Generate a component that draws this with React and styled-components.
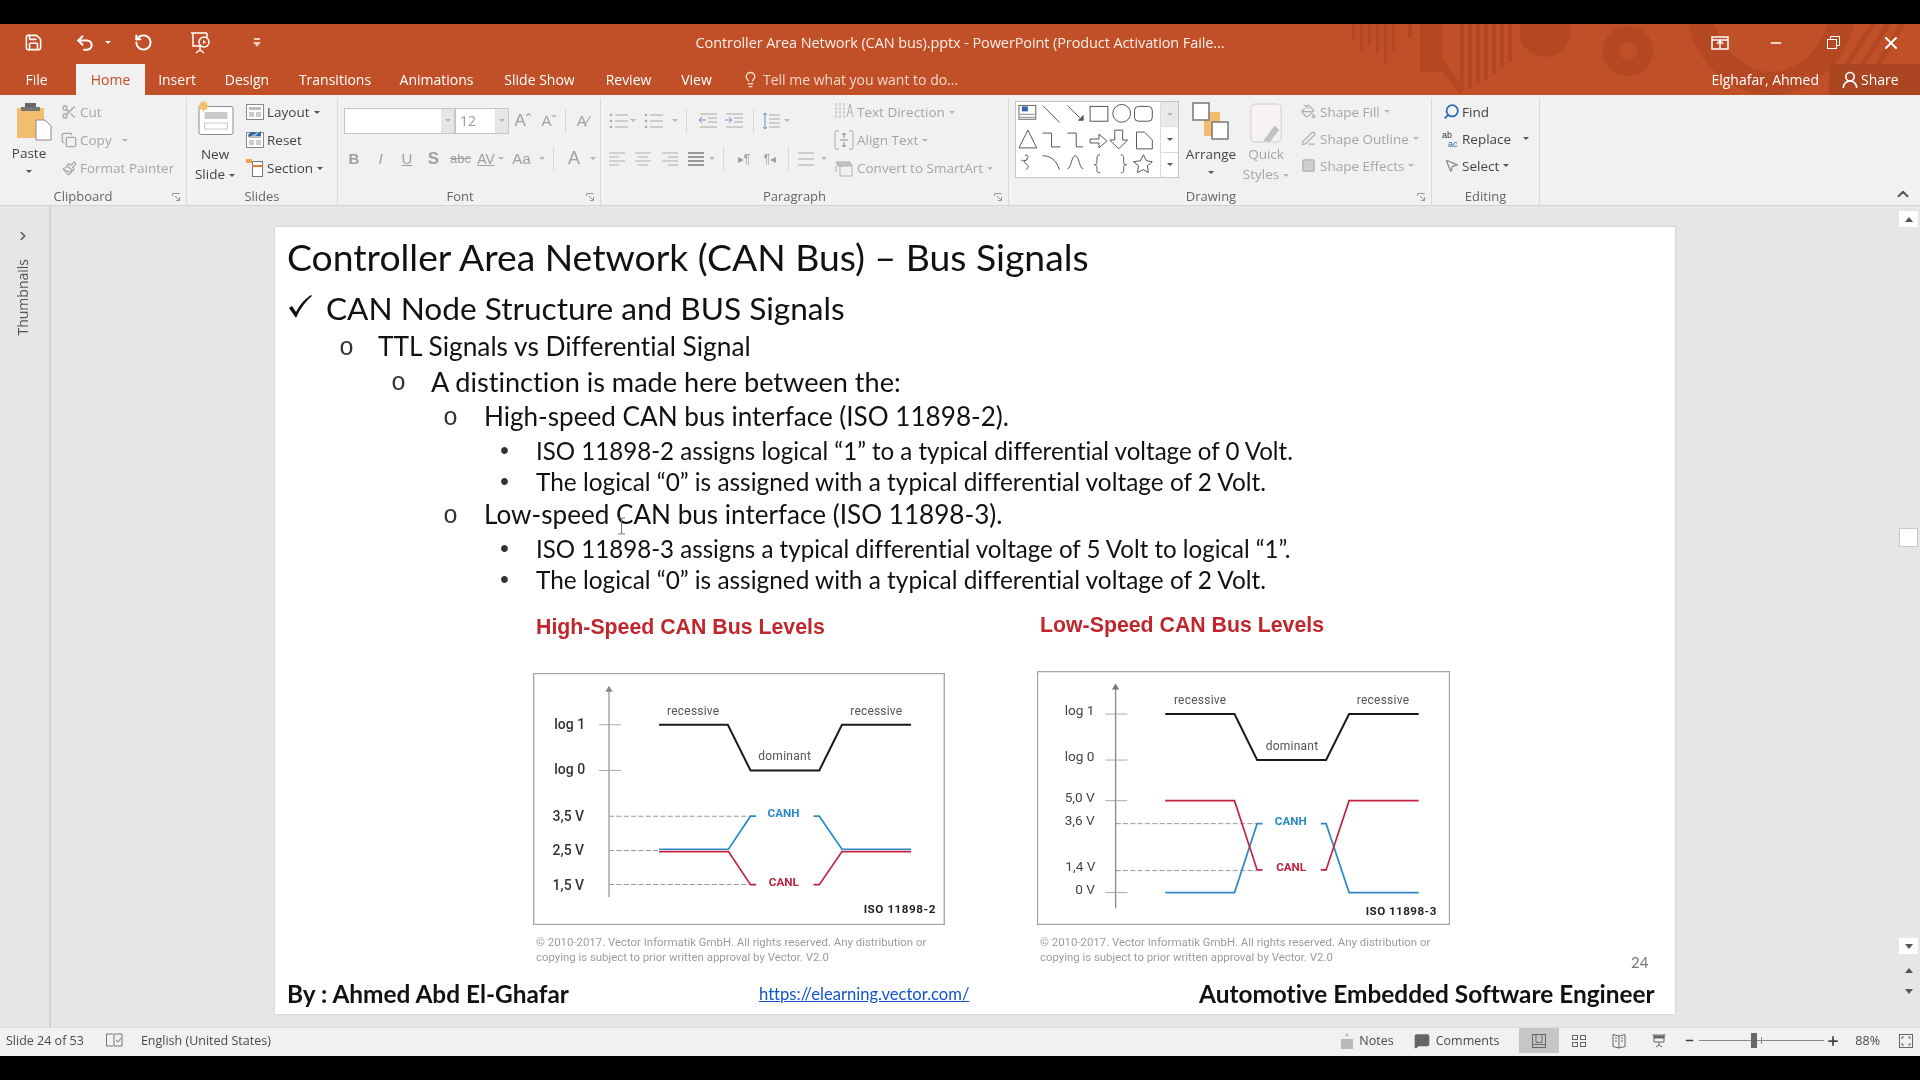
import React from 'react';
import styled, { createGlobalStyle } from 'styled-components';
import {
  Scissors, Copy, Paintbrush, Save, Undo2, RotateCcw, Lightbulb, X, Minus, ChevronRight, ChevronUp,
  Search, MousePointer2, PaintBucket, PenLine, Square, MessageSquare, Plus, UserRound,
} from 'lucide-react';

const GlobalStyle = createGlobalStyle`
  html, body { margin: 0; padding: 0; background: #000; }
  body { width: 1920px; height: 1080px; overflow: hidden; font-family: "Open Sans", "Liberation Sans", sans-serif; }
`;

const Page = styled.div`
  width: 1920px;
  height: 1080px;
  background: #000;
  padding: 24px 0;
  box-sizing: border-box;
  display: flex;
  flex-direction: column;
  filter: blur(0.45px);
`;

/* ---------- orange header ---------- */

const Header = styled.header`
  position: relative;
  height: 71px;
  background: #c14f27;
  color: #fff;
  flex: none;
`;

const HeaderArt = styled.svg`
  position: absolute;
  right: 0;
  top: 0;
`;

const TitleRow = styled.div`
  position: relative;
  height: 35px;
  padding-top: 2px;
  box-sizing: border-box;
  display: grid;
  grid-template-columns: 1fr auto 1fr;
  align-items: center;
`;

const Qat = styled.div`
  display: flex;
  align-items: center;
`;

const QatItem = styled.div`
  width: ${p => p.$w}px;
  display: flex;
  justify-content: center;
  align-items: center;
`;

const DocTitle = styled.div`
  font-size: 14.5px;
  letter-spacing: -0.1px;
  color: #fbeee8;
`;

const WinControls = styled.div`
  display: flex;
  justify-content: flex-end;
  align-items: center;
`;

const WinButton = styled.div`
  width: ${p => p.$w}px;
  display: flex;
  justify-content: center;
`;

const TabRow = styled.nav`
  position: relative;
  height: 36px;
  display: flex;
  align-items: flex-end;
  font-size: 14px;
`;

const Tab = styled.div`
  width: ${p => p.$w}px;
  height: 31px;
  margin-right: ${p => p.$mr || 0}px;
  display: flex;
  align-items: center;
  justify-content: center;
  background: ${p => (p.$active ? '#f1f1f1' : 'transparent')};
  color: ${p => (p.$active ? '#c14f27' : '#fff')};
`;

const TellMe = styled.div`
  margin-left: 15px;
  height: 31px;
  display: flex;
  align-items: center;
  gap: 4px;
  color: #f5d9cc;
`;

const TabRight = styled.div`
  margin-left: auto;
  display: flex;
  align-items: center;
  height: 31px;
`;

const UserName = styled.div`
  margin-right: 10px;
`;

const ShareBox = styled.div`
  width: 91px;
  height: 31px;
  background: #ab4522;
  display: flex;
  align-items: center;
  padding-left: 11px;
  gap: 1px;
  box-sizing: border-box;
`;

/* ---------- ribbon ---------- */

const Ribbon = styled.div`
  position: relative;
  height: 111px;
  flex: none;
  display: flex;
  background: #f1f1f1;
  border-bottom: 1px solid #d4d4d4;
  box-sizing: border-box;
  font-size: 13.5px;
  color: #444;
`;

const Group = styled.section`
  position: relative;
  width: ${p => p.$w}px;
  box-sizing: border-box;
  display: flex;
  flex-direction: column;
  margin-top: 3px;
  border-right: 1px solid #dadada;
`;

const GroupBody = styled.div`
  flex: 1;
  display: flex;
  min-height: 0;
`;

const GroupLabel = styled.div`
  height: 18px;
  line-height: 18px;
  text-align: center;
  font-size: 13px;
  color: #666;
  padding-right: ${p => p.$pr || 0}px;
`;

const Launcher = styled.svg`
  position: absolute;
  right: 6px;
  bottom: 4px;
`;

const BigButton = styled.div`
  width: ${p => p.$w}px;
  flex: none;
  display: flex;
  flex-direction: column;
  align-items: center;
  padding-top: ${p => p.$pt || 5}px;
  box-sizing: border-box;
  line-height: 20px;
  white-space: nowrap;
  color: ${p => (p.$muted ? '#a5a5a5' : '#444')};
`;

const BigIcon = styled.div`
  height: ${p => p.$h}px;
  display: flex;
  align-items: flex-start;
`;

const Caret = styled.span`
  display: inline-block;
  width: 0;
  height: 0;
  margin-left: ${p => p.$ml ?? 4}px;
  margin-top: ${p => p.$mt || 0}px;
  vertical-align: middle;
  border-left: 3px solid transparent;
  border-right: 3px solid transparent;
  border-top: 3px solid ${p => (p.$muted ? '#b5b5b5' : '#555')};
`;

const SmallList = styled.div`
  display: flex;
  flex-direction: column;
  flex: none;
  padding-top: ${p => p.$pt ?? 0}px;
  padding-left: ${p => p.$pl ?? 0}px;
  box-sizing: border-box;
`;

const SmallRow = styled.div`
  height: ${p => p.$h || 28}px;
  flex: none;
  display: flex;
  align-items: center;
  white-space: nowrap;
  color: ${p => (p.$muted ? '#a5a5a5' : '#444')};
`;

const SmallIcon = styled.div`
  width: ${p => p.$w || 22}px;
  flex: none;
  display: flex;
  justify-content: center;
  align-items: center;
`;

const ToolStack = styled.div`
  display: flex;
  flex-direction: column;
  padding-top: ${p => p.$pt || 11}px;
  gap: ${p => p.$gap || 10}px;
`;

const ToolRow = styled.div`
  display: flex;
  align-items: center;
  height: 27px;
  padding-left: ${p => p.$pl || 0}px;
`;

const Tool = styled.div`
  width: ${p => p.$w}px;
  flex: none;
  display: flex;
  align-items: center;
  justify-content: center;
  color: #a0a0a0;
  font-size: ${p => p.$size || 15}px;
  font-weight: ${p => (p.$bold ? 700 : 400)};
  font-style: ${p => (p.$italic ? 'italic' : 'normal')};
  text-decoration: ${p => (p.$under ? 'underline' : p.$strike ? 'line-through' : 'none')};
  font-family: "Liberation Sans", sans-serif;
`;

const ToolSep = styled.div`
  width: 1px;
  height: 24px;
  background: #d8d8d8;
  flex: none;
  margin: 0 ${p => p.$m || 8}px;
`;

const InputBox = styled.div`
  width: ${p => p.$w}px;
  height: 26px;
  background: #fff;
  border: 1px solid #c6c6c6;
  box-sizing: border-box;
  display: flex;
  align-items: center;
  justify-content: space-between;
  font-size: 14px;
  color: #9a9a9a;
  padding-left: 4px;
`;

const InputCaret = styled.div`
  width: 13px;
  height: 100%;
  background: #e6e6e6;
  display: flex;
  align-items: center;
  justify-content: center;
`;

const TextTools = styled(SmallList)`
  margin-left: 4px;
`;

const Gallery = styled.div`
  margin: 3px 0 0 6px;
  width: 164px;
  height: 77px;
  background: #fff;
  border: 1px solid #c4c4c4;
  box-sizing: border-box;
  display: flex;
  flex: none;
`;

const GalleryScroll = styled.div`
  margin-left: auto;
  width: 17px;
  display: flex;
  flex-direction: column;
  border-left: 1px solid #dcdcdc;
`;

const GalleryStep = styled.div`
  flex: 1;
  display: flex;
  align-items: center;
  justify-content: center;
  background: ${p => (p.$dim ? '#e9e9e9' : '#fff')};
  border-top: ${p => (p.$line ? '1px solid #dcdcdc' : 'none')};
`;

const CollapseButton = styled.div`
  position: absolute;
  right: 8px;
  bottom: 2px;
  color: #555;
  display: flex;
`;

/* ---------- workspace ---------- */

const Workspace = styled.main`
  flex: 1;
  min-height: 0;
  display: flex;
  background: #e6e6e6;
`;

const ThumbPane = styled.aside`
  width: 51px;
  flex: none;
  box-sizing: border-box;
  border-right: 2px solid #d2d2d2;
  display: flex;
  flex-direction: column;
  align-items: center;
  padding: 23px 4px 0 0;
  color: #555;
`;

const ThumbLabel = styled.div`
  writing-mode: vertical-rl;
  transform: rotate(180deg);
  font-size: 14px;
  margin-top: 16px;
`;

const Stage = styled.div`
  flex: 1;
  padding: 21px 0 0 224px;
  min-width: 0;
`;

const Slide = styled.article`
  position: relative;
  width: 1400px;
  height: 787px;
  background: #fff;
  box-shadow: 0 0 2px #bcbcbc;
  color: #111;
  font-family: Lato, "Open Sans", sans-serif;
  font-variant-ligatures: none;
  display: flex;
  flex-direction: column;
  padding-top: 8px;
  box-sizing: border-box;
`;

const SlideTitle = styled.h1`
  margin: 0 0 9px 12px;
  height: 44px;
  line-height: 44px;
  font-size: 37.3px;
  font-weight: 400;
  white-space: nowrap;
`;

const Bullet = styled.div`
  height: ${p => p.$h}px;
  line-height: ${p => p.$h - 1}px;
  padding-left: ${p => p.$x}px;
  display: flex;
  white-space: nowrap;
  font-size: ${p => p.$size}px;
`;

const Marker = styled.span`
  width: ${p => p.$w}px;
  flex: none;
  display: flex;
  align-items: center;
  font-family: "Liberation Mono", monospace;
  font-size: 25px;
  padding-top: 3px;
  box-sizing: border-box;
  color: #333;
`;

const Charts = styled.div`
  display: flex;
  padding-left: 258px;
`;

const ChartColumn = styled.div`
  width: ${p => p.$w}px;
  padding-top: ${p => p.$pt}px;
`;

const ChartHeading = styled.div`
  height: 30px;
  line-height: 30px;
  margin: 0 0 31px 3px;
  color: #c0272d;
  font-family: "Liberation Sans", sans-serif;
  font-weight: 700;
  font-size: 21.3px;
`;

const Chart = styled.svg`
  display: block;
  background: #fff;
`;

const Copyright = styled.div`
  margin: 10px 0 0 3px;
  font-family: Roboto, sans-serif;
  font-size: 11.4px;
  line-height: 15px;
  color: #9c9c9c;
  white-space: nowrap;
`;

const Footer = styled.footer`
  display: flex;
  align-items: center;
  height: 36px;
  margin-top: 11px;
  padding-left: 12px;
  font-size: 24.4px;
  font-weight: 700;
  white-space: nowrap;
`;

const FooterCell = styled.div`
  width: ${p => p.$w}px;
  flex: none;
  padding-bottom: ${p => p.$pb || 0}px;
  line-height: 30px;
  box-sizing: border-box;
`;

const FooterLink = styled.a`
  color: #1155cc;
  font-size: 16.6px;
  font-weight: 400;
  text-decoration: underline;
`;

const PageNumber = styled.div`
  position: absolute;
  left: 1356px;
  top: 726px;
  font-size: 15px;
  color: #777;
`;

const TextCursor = styled.svg`
  position: absolute;
  left: 342px;
  top: 290px;
`;

const ScrollRail = styled.aside`
  width: 23px;
  flex: none;
  display: flex;
  flex-direction: column;
  align-items: center;
  color: #555;
  padding-top: 5px;
  box-sizing: border-box;
`;

const ScrollArrow = styled.div`
  width: 19px;
  height: 16px;
  background: #fff;
  display: flex;
  align-items: center;
  justify-content: center;
`;

const ArrowGlyph = styled.span`
  width: 0;
  height: 0;
  border-left: 4px solid transparent;
  border-right: 4px solid transparent;
  ${p => (p.$up ? 'border-bottom: 5px solid #555;' : 'border-top: 5px solid #555;')}
`;

const ScrollThumb = styled.div`
  width: 19px;
  height: 19px;
  margin: 301px 0 391px;
  background: #fff;
  border: 1px solid #c8c8c8;
  box-sizing: border-box;
`;

const PageJump = styled.div`
  height: 21px;
  display: flex;
  align-items: center;
`;

/* ---------- status bar ---------- */

const StatusBar = styled.footer`
  height: 29px;
  flex: none;
  display: flex;
  align-items: center;
  background: #f1f1f1;
  border-top: 1px solid #dcdcdc;
  box-sizing: border-box;
  font-size: 12.5px;
  color: #4a4a4a;
  padding-bottom: 3px;
`;

const StatusText = styled.div`
  margin-left: ${p => p.$ml || 0}px;
  margin-right: ${p => p.$mr || 0}px;
  white-space: nowrap;
  display: flex;
`;

const StatusRight = styled.div`
  margin-left: auto;
  display: flex;
  align-items: center;
  height: 100%;
`;

const ViewButton = styled.div`
  width: ${p => p.$w || 40}px;
  height: 100%;
  margin-left: ${p => p.$ml || 0}px;
  display: flex;
  align-items: center;
  justify-content: center;
  background: ${p => (p.$active ? '#c6c6c6' : 'transparent')};
`;

const StatusItem = styled.div`
  display: flex;
  align-items: center;
  gap: 6px;
  margin-right: ${p => p.$mr || 0}px;
`;

const ZoomTrack = styled.div`
  position: relative;
  width: 125px;
  height: 1px;
  margin: 0 2px 0 4px;
  background: #8a8a8a;
`;

const ZoomThumb = styled.div`
  position: absolute;
  left: 52px;
  top: -7px;
  width: 6px;
  height: 15px;
  background: #666;
`;

const ZoomTick = styled.div`
  position: absolute;
  left: 62px;
  top: -3px;
  width: 1px;
  height: 7px;
  background: #888;
`;

/* ---------- drawings ---------- */

const PasteIcon = () => (
  <svg width="35" height="38" viewBox="0 0 35 38">
    <rect x="0" y="5" width="27" height="30" fill="#f3bd6e" />
    <rect x="8" y="0" width="11" height="7" fill="#666" />
    <rect x="4" y="4" width="19" height="4" fill="#777" />
    <path d="M19 17h9l6 6v14H19z" fill="#fff" stroke="#8a8a8a" />
  </svg>
);

const NewSlideIcon = () => (
  <svg width="39" height="36" viewBox="0 0 38 36">
    <rect x="2.5" y="6.5" width="34" height="28" rx="2" fill="#fff" stroke="#8a8a8a" />
    <rect x="8" y="12" width="23" height="7" fill="#c9c9c9" />
    <rect x="8" y="23" width="23" height="6" fill="none" stroke="#c9c9c9" />
    <circle cx="7" cy="6" r="4" fill="#f3bd6e" />
    <path d="M7 0v12M1 6h12M3 2l8 8M11 2l-8 8" stroke="#f3bd6e" />
  </svg>
);

const MiniSlide = ({ accent }) => (
  <svg width="20" height="20" viewBox="0 0 20 20">
    <rect x="1.5" y="2.5" width="17" height="15" fill="#fff" stroke="#888" />
    <rect x="4" y="5" width="12" height="3" fill="#bbb" />
    <rect x="4" y="10" width="5" height="5" fill="#ccc" />
    <rect x="11" y="10" width="5" height="5" fill="#ccc" />
    {accent === 'reset' && <path d="M3 7a5 5 0 0 1 9-3l-2 2h6V1l-2 2" fill="#2b66b1" />}
  </svg>
);

const SectionIcon = () => (
  <svg width="20" height="20" viewBox="0 0 20 20">
    <rect x="1" y="1" width="6" height="4" fill="#f0a64e" />
    <rect x="7.5" y="3.5" width="10" height="15" fill="#fff" stroke="#777" />
    <path d="M7 8h11" stroke="#e07b39" strokeWidth="2" />
  </svg>
);

const ArrangeIcon = () => (
  <svg width="38" height="38" viewBox="0 0 38 38">
    <rect x="12" y="10" width="16" height="24" fill="#f3bd6e" />
    <rect x="1" y="1" width="16" height="17" fill="#fff" stroke="#777" strokeWidth="1.5" />
    <rect x="20" y="20" width="16" height="17" fill="#fff" stroke="#777" strokeWidth="1.5" />
  </svg>
);

const QuickStylesIcon = () => (
  <svg width="34" height="40" viewBox="0 0 34 42">
    <rect x="1" y="1" width="32" height="40" rx="5" fill="#f7f3f5" stroke="#d8d8d8" strokeWidth="1.5" />
    <path d="M14 40l12-16 5 4-10 13z" fill="#c2c2c2" />
  </svg>
);

const TextDirectionIcon = () => (
  <svg width="20" height="20" viewBox="0 0 20 20" fill="none" stroke="#b0b0b0">
    <path d="M2 1v15M6 1v15M10 1v15" strokeDasharray="3 1" />
    <path d="M13 15L16 2l3 13M14 10h4" />
  </svg>
);

const AlignTextIcon = () => (
  <svg width="20" height="20" viewBox="0 0 20 20" fill="none" stroke="#b0b0b0">
    <path d="M5 1H1v18h4M15 1h4v18h-4" />
    <path d="M10 3v5M8 5l2-2 2 2M10 17v-5M8 15l2 2 2-2M6 10h8" stroke="#888" />
  </svg>
);

const SmartArtIcon = () => (
  <svg width="20" height="20" viewBox="0 0 20 20" fill="none" stroke="#b0b0b0">
    <path d="M2 4h14l2 4H4z" fill="#c4c4c4" />
    <path d="M6 8v10h12V8M2 8v6" />
  </svg>
);

const ShapesDrawing = () => (
  <svg width="146" height="75" viewBox="0 3 146 75" fill="none" stroke="#555" strokeWidth="1">
    <rect x="3" y="6" width="17" height="14" stroke="#666" />
    <rect x="6" y="7" width="6" height="5" fill="#2b66b1" stroke="none" />
    <path d="M4 15h15M4 18h15" stroke="#888" />
    <path d="M27 6l17 17M52 6l15 15" />
    <path d="M63 21h5v-5" fill="#555" />
    <rect x="75" y="7" width="18" height="15" />
    <circle cx="107" cy="14" r="9" />
    <rect x="120" y="7" width="18" height="15" rx="4" />
    <path d="M12 31l9 18H3z" />
    <path d="M27 34h9v14h9M52 34h9v14h7" />
    <path d="M75 40h9v-5l8 7-8 7v-5h-9z" />
    <path d="M100 31h8v10h5l-9 9-9-9h5z" />
    <path d="M122 33h8l8 8v9h-16z" />
    <path d="M9 57c3-2 4 1 2 3s-4 3-1 5 3 4 0 6M5 61c2 2 6 1 7-1" />
    <path d="M27 57c7 0 13 3 17 14M52 70c4 0 4-13 8-13s4 13 8 13" />
    <path d="M85 56c-3 0-3 1-3 6s-2 4-3 4c1 0 3 0 3 4s0 4 3 4" />
    <path d="M106 56c3 0 3 1 3 6s2 4 3 4c-1 0-3 0-3 4s0 4-3 4" />
    <path d="M129 56l3 6 6 1-5 4 1 7-5-3-6 3 1-7-5-4 7-1z" />
  </svg>
);

const LinesIcon = ({ dots }) => (
  <svg width="20" height="18" viewBox="0 0 20 18" stroke="#aaa" fill="#aaa">
    {[3, 9, 15].map(y => (
      <g key={y}>
        {dots && <circle cx="2" cy={y} r="1.3" stroke="none" />}
        <path d={`M${dots ? 6 : 2} ${y}h${dots ? 13 : 16}`} />
      </g>
    ))}
  </svg>
);

const SpacingIcon = () => (
  <svg width="20" height="18" viewBox="0 0 20 18" fill="none" stroke="#aaa">
    <path d="M8 3h11M8 7h11M8 11h11M8 15h11" />
    <path d="M4 1v16M2 3l2-2 2 2M2 15l2 2 2-2" stroke="#6d8fc4" />
  </svg>
);

const AlignIcon = ({ mode }) => {
  const rows = mode === 'justify'
    ? [[2, 16], [2, 16], [2, 16], [2, 16]]
    : mode === 'center'
      ? [[2, 16], [5, 10], [2, 16], [5, 10]]
      : mode === 'right'
        ? [[2, 16], [8, 10], [2, 16], [8, 10]]
        : [[2, 16], [2, 10], [2, 16], [2, 10]];
  return (
    <svg width="20" height="16" viewBox="0 0 20 16" stroke={mode === 'justify' ? '#999' : '#d0d0d0'} strokeWidth="2">
      {rows.map(([x, w], i) => <path key={i} d={`M${x} ${2 + i * 4}h${w}`} />)}
    </svg>
  );
};

const IndentIcon = ({ flip }) => (
  <svg width="20" height="18" viewBox="0 0 20 18" stroke="#aaa" fill="none">
    <path d="M2 2h17M10 6h9M10 10h9M2 15h17" />
    <path d={flip ? 'M1 8h7M5 5l3 3-3 3' : 'M8 8H1M4 5L1 8l3 3'} stroke="#6d8fc4" />
  </svg>
);

const ChartAxisTicks = ({ x, ys }) => ys.map(y => <path key={y} d={`M${x - 32} ${y}h66`} stroke="#9a9a9a" strokeWidth="2.5" />);

const chartText = { fontFamily: 'Roboto, sans-serif' };

const HighSpeedChart = () => (
  <Chart width="412" height="252" viewBox="40 38 1233 755">
    <rect x="41.5" y="39.5" width="1230" height="752" fill="#fff" stroke="#a4a4a4" strokeWidth="4" />
    <path d="M267 710V85" stroke="#999" strokeWidth="4" />
    <path d="M267 76l-11 18h22z" fill="#888" />
    <ChartAxisTicks x={269} ys={[193, 330]} />
    <path d="M267 467H690M267 570H420M267 672H690" stroke="#999" strokeWidth="3" strokeDasharray="15 7" />
    <path d="M417 193H623L691 330H897L965 193H1172" fill="none" stroke="#1a1a1a" strokeWidth="6" />
    <path d="M417 566H625L691 467H708M880 467H897L965 566H1172" fill="none" stroke="#2a8ac4" strokeWidth="5" />
    <path d="M417 573H625L691 672H708M880 672H897L965 573H1172" fill="none" stroke="#c2213f" strokeWidth="5" />
    <g style={chartText} fontSize="36" fill="#555">
      <text x="441" y="163" textLength="156">recessive</text>
      <text x="990" y="163" textLength="155">recessive</text>
      <text x="714" y="300" textLength="158">dominant</text>
    </g>
    <g style={chartText} fontSize="42" fontWeight="500" fill="#333">
      <text x="103" y="205">log 1</text>
      <text x="103" y="342">log 0</text>
      <text x="98" y="481">3,5 V</text>
      <text x="98" y="584">2,5 V</text>
      <text x="98" y="687">1,5 V</text>
    </g>
    <g style={chartText} fontSize="35" fontWeight="700">
      <text x="742" y="470" fill="#2a8ac4">CANH</text>
      <text x="746" y="677" fill="#c2213f">CANL</text>
      <text x="1030" y="758" fill="#222" textLength="215">ISO 11898-2</text>
    </g>
  </Chart>
);

const LowSpeedChart = () => (
  <Chart width="413" height="254" viewBox="50 33 1240 762">
    <rect x="51.5" y="34.5" width="1237" height="759" fill="#fff" stroke="#a4a4a4" strokeWidth="4" />
    <path d="M286 745V80" stroke="#888" strokeWidth="4" />
    <path d="M286 70l-11 18h22z" fill="#777" />
    <ChartAxisTicks x={287} ys={[162, 300, 422, 698]} />
    <path d="M286 491H710M286 632H710" stroke="#999" strokeWidth="3" strokeDasharray="15 7" />
    <path d="M435 162H643L711 300H918L987 162H1196" fill="none" stroke="#1a1a1a" strokeWidth="6" />
    <path d="M435 698H643L711 491H727M902 491H918L987 698H1196" fill="none" stroke="#2a8ac4" strokeWidth="5" />
    <path d="M435 422H643L711 630H727M902 630H918L987 422H1196" fill="none" stroke="#c2213f" strokeWidth="5" />
    <g style={chartText} fontSize="36" fill="#555">
      <text x="461" y="133" textLength="157">recessive</text>
      <text x="1010" y="133" textLength="157">recessive</text>
      <text x="737" y="270" textLength="157">dominant</text>
    </g>
    <g style={chartText} fontSize="41" fill="#444">
      <text x="133" y="165">log 1</text>
      <text x="133" y="304">log 0</text>
      <text x="133" y="426">5,0 V</text>
      <text x="133" y="494">3,6 V</text>
      <text x="135" y="633">1,4 V</text>
      <text x="165" y="701">0 V</text>
    </g>
    <g style={chartText} fontSize="35" fontWeight="700">
      <text x="764" y="494" fill="#2a8ac4">CANH</text>
      <text x="768" y="632" fill="#c2213f">CANL</text>
      <text x="1037" y="766" fill="#222" textLength="212">ISO 11898-3</text>
    </g>
  </Chart>
);

const launcher = (
  <Launcher width="8" height="8" viewBox="0 0 8 8" fill="none" stroke="#999">
    <path d="M0.5 3V0.5H7.5M7.5 7.5L3 3M7.5 4v3.5H4" />
  </Launcher>
);

const tabs = [
  ['File', 73, 3], ['Home', 69, 0, true], ['Insert', 64], ['Design', 76], ['Transitions', 100],
  ['Animations', 103], ['Slide Show', 103], ['Review', 75], ['View', 61],
];

const bullets = [
  { h: 42, x: 12, size: 31.6, m: 39, check: true, text: 'CAN Node Structure and BUS Signals' },
  { h: 34, x: 64, size: 26.3, m: 39, mark: 'o', text: 'TTL Signals vs Differential Signal' },
  { h: 36, x: 116, size: 27.1, m: 40, mark: 'o', text: 'A distinction is made here between the:' },
  { h: 34, x: 168, size: 26.1, m: 41, mark: 'o', text: 'High-speed CAN bus interface (ISO 11898-2).' },
  { h: 34, x: 222, size: 24.1, m: 39, mark: '•', text: 'ISO 11898-2 assigns logical “1” to a typical differential voltage of 0 Volt.' },
  { h: 28, x: 222, size: 24.4, m: 39, mark: '•', text: 'The logical “0” is assigned with a typical differential voltage of 2 Volt.' },
  { h: 38, x: 168, size: 26.1, m: 41, mark: 'o', text: 'Low-speed CAN bus interface (ISO 11898-3).' },
  { h: 30, x: 222, size: 24.1, m: 39, mark: '•', text: 'ISO 11898-3 assigns a typical differential voltage of 5 Volt to logical “1”.' },
  { h: 32, x: 222, size: 24.4, m: 39, mark: '•', text: 'The logical “0” is assigned with a typical differential voltage of 2 Volt.' },
];

export default function App() {
  return (
    <>
      <GlobalStyle />
      <Page>
        <Header>
          <HeaderArt width="580" height="71" viewBox="0 0 580 71" fill="#b34822">
            <path d="M12 0h3v17h-3zM20 0h3v28h-3zM28 0h3v22h-3zM36 0h3v30h-3zM44 0h3v40h-3zM52 0h3v28h-3zM68 0h4v14h-4zM80 0h22v34l18 26V0h4v64l-4 6-18-22H80zM128 0h4v65h-4zM136 0h4v60h-4zM144 0h4v56h-4zM152 0h4v50h-4zM160 0h4v44h-4zM168 0h4v38h-4z" />
            <path d="M180 0h50a25 25 0 0 1-50 14z" />
            <path fillRule="evenodd" d="M288 2a25 25 0 1 1-.1 0zM288 18a9 9 0 1 0 .1 0z" />
            <path fillRule="evenodd" d="M348 0h166c-8 38-42 71-83 71s-75-33-83-71zm26 0c7 22 28 48 57 48s50-26 57-48z" />
            <path d="M530 0h6l-38 60h-6zM545 0h6l-30 48h-6zM560 0h6l-26 42h-6z" />
          </HeaderArt>
          <TitleRow>
            <Qat>
              <QatItem $w={66}><Save size={19} color="#fff" /></QatItem>
              <QatItem $w={38}><Undo2 size={20} color="#fff" strokeWidth={2.5} /></QatItem>
              <QatItem $w={8}><Caret $ml={0} style={{ borderTopColor: '#fff' }} /></QatItem>
              <QatItem $w={62}><RotateCcw size={19} color="#fff" strokeWidth={2.5} /></QatItem>
              <QatItem $w={52}>
                <svg width="22" height="24" viewBox="0 0 22 24" fill="none" stroke="#fff" strokeWidth="1.5">
                  <path d="M2 2h16M4 2v13h14V2M11 15v4M7 22l4-3 4 3" />
                  <circle cx="15" cy="11" r="5" fill="#c14f27" />
                  <path d="M14 9l3 2-3 2z" fill="#fff" stroke="none" />
                </svg>
              </QatItem>
              <QatItem $w={62}>
                <svg width="8" height="10" viewBox="0 0 8 10" fill="#f0cdbf"><path d="M1 0h6v2H1zM0 4h8L4 9z" /></svg>
              </QatItem>
            </Qat>
            <DocTitle>Controller Area Network (CAN bus).pptx - PowerPoint (Product Activation Faile...</DocTitle>
            <WinControls>
              <WinButton $w={57}>
                <svg width="18" height="14" viewBox="0 0 18 14" fill="none" stroke="#fff" strokeWidth="1.5">
                  <rect x="1" y="1" width="16" height="12" />
                  <path d="M1 4h16M9 12V6M6 8l3-3 3 3" />
                </svg>
              </WinButton>
              <WinButton $w={56}><Minus size={16} color="#fff" strokeWidth={2} /></WinButton>
              <WinButton $w={58}>
                <svg width="13" height="13" viewBox="0 0 13 13" fill="none" stroke="#fff">
                  <rect x="0.5" y="3.5" width="9" height="9" />
                  <path d="M3.5 3V.5h9v9H10" />
                </svg>
              </WinButton>
              <WinButton $w={58}><X size={20} color="#fff" strokeWidth={2.5} /></WinButton>
            </WinControls>
          </TitleRow>
          <TabRow>
            {tabs.map(([name, w, mr, active]) => (
              <Tab key={name} $w={w} $mr={mr} $active={active}>{name}</Tab>
            ))}
            <TellMe>
              <Lightbulb size={17} color="#f5d9cc" />
              Tell me what you want to do...
            </TellMe>
            <TabRight>
              <UserName>Elghafar, Ahmed</UserName>
              <ShareBox>
                <UserRound size={20} color="#fff" />
                Share
              </ShareBox>
            </TabRight>
          </TabRow>
        </Header>

        <Ribbon>
          <Group $w={187}>
            <GroupBody>
              <BigButton $w={58} $pt={5}>
                <BigIcon $h={40} style={{ marginLeft: 10 }}><PasteIcon /></BigIcon>
                <span>Paste</span>
                <Caret $ml={0} $mt={7} />
              </BigButton>
              <SmallList>
                <SmallRow $muted><SmallIcon><Scissors size={16} color="#a8a8a8" /></SmallIcon>Cut</SmallRow>
                <SmallRow $muted><SmallIcon><Copy size={16} color="#a8a8a8" /></SmallIcon>Copy<Caret $ml={10} $muted /></SmallRow>
                <SmallRow $muted><SmallIcon><Paintbrush size={15} color="#a8a8a8" /></SmallIcon>Format Painter</SmallRow>
              </SmallList>
            </GroupBody>
            <GroupLabel $pr={20}>Clipboard</GroupLabel>
            {launcher}
          </Group>

          <Group $w={151}>
            <GroupBody>
              <BigButton $w={56} $pt={2}>
                <BigIcon $h={44}><NewSlideIcon /></BigIcon>
                <span>New</span>
                <span>Slide<Caret /></span>
              </BigButton>
              <SmallList>
                <SmallRow><SmallIcon $w={24}><MiniSlide /></SmallIcon>Layout<Caret /></SmallRow>
                <SmallRow><SmallIcon $w={24}><MiniSlide accent="reset" /></SmallIcon>Reset</SmallRow>
                <SmallRow><SmallIcon $w={24}><SectionIcon /></SmallIcon>Section<Caret /></SmallRow>
              </SmallList>
            </GroupBody>
            <GroupLabel>Slides</GroupLabel>
          </Group>

          <Group $w={263}>
            <GroupBody>
              <ToolStack $pt={9} $gap={11}>
                <ToolRow $pl={6}>
                  <InputBox $w={111}><span /><InputCaret><Caret $ml={0} $muted /></InputCaret></InputBox>
                  <InputBox $w={54}>12<InputCaret><Caret $ml={0} $muted /></InputCaret></InputBox>
                  <Tool $w={28} $size={17}>Aˆ</Tool>
                  <Tool $w={24} $size={15}>Aˇ</Tool>
                  <ToolSep $m={4} />
                  <Tool $w={26} $size={15}>A⁄</Tool>
                </ToolRow>
                <ToolRow $pl={3}>
                  <Tool $w={26} $bold>B</Tool>
                  <Tool $w={27} $italic>I</Tool>
                  <Tool $w={26} $under>U</Tool>
                  <Tool $w={27} $bold $size={17}>S</Tool>
                  <Tool $w={27} $size={13} $strike>abc</Tool>
                  <Tool $w={24} $size={14} $under>AV</Tool>
                  <Caret $ml={0} $muted />
                  <Tool $w={35} $size={15}>Aa</Tool>
                  <Caret $ml={0} $muted />
                  <ToolSep $m={8} />
                  <Tool $w={24} $size={18}>A</Tool>
                  <Caret $ml={4} $muted />
                </ToolRow>
              </ToolStack>
            </GroupBody>
            <GroupLabel $pr={18}>Font</GroupLabel>
            {launcher}
          </Group>

          <Group $w={408}>
            <GroupBody>
              <ToolStack $pt={9} $gap={11}>
                <ToolRow $pl={7}>
                  <Tool $w={22}><LinesIcon dots /></Tool>
                  <Caret $ml={0} $muted />
                  <Tool $w={36}><LinesIcon dots /></Tool>
                  <Caret $ml={0} $muted />
                  <ToolSep $m={8} />
                  <Tool $w={26}><IndentIcon /></Tool>
                  <Tool $w={26}><IndentIcon flip /></Tool>
                  <ToolSep $m={6} />
                  <Tool $w={22}><SpacingIcon /></Tool>
                  <Caret $ml={2} $muted />
                </ToolRow>
                <ToolRow $pl={3}>
                  <Tool $w={26}><AlignIcon mode="left" /></Tool>
                  <Tool $w={26}><AlignIcon mode="center" /></Tool>
                  <Tool $w={27}><AlignIcon mode="right" /></Tool>
                  <Tool $w={26}><AlignIcon mode="justify" /></Tool>
                  <Caret $ml={0} $muted />
                  <ToolSep $m={8} />
                  <Tool $w={24} $size={12}>▸¶</Tool>
                  <Tool $w={28} $size={12}>¶◂</Tool>
                  <ToolSep $m={4} />
                  <Tool $w={26}><LinesIcon /></Tool>
                  <Caret $ml={2} $muted />
                </ToolRow>
              </ToolStack>
              <TextTools>
                <SmallRow $muted><SmallIcon $w={26}><TextDirectionIcon /></SmallIcon>Text Direction<Caret $muted /></SmallRow>
                <SmallRow $muted><SmallIcon $w={26}><AlignTextIcon /></SmallIcon>Align Text<Caret $muted /></SmallRow>
                <SmallRow $muted><SmallIcon $w={26}><SmartArtIcon /></SmallIcon>Convert to SmartArt<Caret $muted /></SmallRow>
              </TextTools>
            </GroupBody>
            <GroupLabel $pr={20}>Paragraph</GroupLabel>
            {launcher}
          </Group>

          <Group $w={423}>
            <GroupBody>
              <Gallery>
                <ShapesDrawing />
                <GalleryScroll>
                  <GalleryStep $dim><Caret $ml={0} $muted /></GalleryStep>
                  <GalleryStep $line><Caret $ml={0} /></GalleryStep>
                  <GalleryStep $line><Caret $ml={0} /></GalleryStep>
                </GalleryScroll>
              </Gallery>
              <BigButton $w={64} $pt={4}>
                <BigIcon $h={42}><ArrangeIcon /></BigIcon>
                <span>Arrange</span>
                <Caret $ml={0} $mt={7} />
              </BigButton>
              <BigButton $w={46} $pt={5} $muted>
                <BigIcon $h={41}><QuickStylesIcon /></BigIcon>
                <span>Quick</span>
                <span>Styles<Caret $muted /></span>
              </BigButton>
              <SmallList $pl={7}>
                <SmallRow $h={27} $muted><SmallIcon $w={24}><PaintBucket size={15} color="#b0b0b0" /></SmallIcon>Shape Fill<Caret $muted /></SmallRow>
                <SmallRow $h={27} $muted><SmallIcon $w={24}><PenLine size={15} color="#b0b0b0" /></SmallIcon>Shape Outline<Caret $muted /></SmallRow>
                <SmallRow $h={27} $muted><SmallIcon $w={24}><Square size={15} color="#b0b0b0" fill="#cfcfcf" /></SmallIcon>Shape Effects<Caret $muted /></SmallRow>
              </SmallList>
            </GroupBody>
            <GroupLabel $pr={18}>Drawing</GroupLabel>
            {launcher}
          </Group>

          <Group $w={108}>
            <GroupBody>
              <SmallList $pl={8}>
                <SmallRow $h={27}>
                  <SmallIcon><Search size={17} color="#2b66b1" strokeWidth={2.4} style={{ transform: 'scaleX(-1)' }} /></SmallIcon>Find
                </SmallRow>
                <SmallRow $h={27}>
                  <SmallIcon>
                    <svg width="20" height="18" viewBox="0 0 20 18">
                      <text x="1" y="8" fontSize="9" fill="#333" fontFamily="Liberation Sans">ab</text>
                      <text x="7" y="17" fontSize="9" fill="#2b66b1" fontFamily="Liberation Sans">ac</text>
                    </svg>
                  </SmallIcon>Replace<Caret $ml={12} />
                </SmallRow>
                <SmallRow $h={27}><SmallIcon><MousePointer2 size={15} color="#888" /></SmallIcon>Select<Caret /></SmallRow>
              </SmallList>
            </GroupBody>
            <GroupLabel>Editing</GroupLabel>
          </Group>

          <CollapseButton><ChevronUp size={18} strokeWidth={2.5} /></CollapseButton>
        </Ribbon>

        <Workspace>
          <ThumbPane>
            <ChevronRight size={14} strokeWidth={2.5} />
            <ThumbLabel>Thumbnails</ThumbLabel>
          </ThumbPane>
          <Stage>
            <Slide>
              <SlideTitle>Controller Area Network (CAN Bus) – Bus Signals</SlideTitle>
              {bullets.map(b => (
                <Bullet key={b.text + b.h} $h={b.h} $x={b.x} $size={b.size}>
                  <Marker $w={b.m}>
                    {b.check ? (
                      <svg width="26" height="26" viewBox="0 0 26 26" style={{ marginTop: -10 }}>
                        <path d="M2 15l3-2 4 6C13 11 18 6 24 2l1 1C18 9 13 16 9 25z" fill="#111" />
                      </svg>
                    ) : b.mark}
                  </Marker>
                  {b.text}
                </Bullet>
              ))}
              <Charts>
                <ChartColumn $w={504} $pt={16}>
                  <ChartHeading>High-Speed CAN Bus Levels</ChartHeading>
                  <HighSpeedChart />
                  <Copyright>
                    © 2010-2017. Vector Informatik GmbH. All rights reserved. Any distribution or<br />
                    copying is subject to prior written approval by Vector. V2.0
                  </Copyright>
                </ChartColumn>
                <ChartColumn $w={413} $pt={14}>
                  <ChartHeading>Low-Speed CAN Bus Levels</ChartHeading>
                  <LowSpeedChart />
                  <Copyright>
                    © 2010-2017. Vector Informatik GmbH. All rights reserved. Any distribution or<br />
                    copying is subject to prior written approval by Vector. V2.0
                  </Copyright>
                </ChartColumn>
              </Charts>
              <Footer>
                <FooterCell $w={472}>By : Ahmed Abd El-Ghafar</FooterCell>
                <FooterCell $w={440} $pb={4}><FooterLink href="#">https://elearning.vector.com/</FooterLink></FooterCell>
                <FooterCell>Automotive Embedded Software Engineer</FooterCell>
              </Footer>
              <PageNumber>24</PageNumber>
              <TextCursor width="9" height="18" viewBox="0 0 9 18" fill="none" stroke="#777">
                <path d="M1 1h3l.5 1 .5-1h3M4.5 2v14M1 17h3l.5-1 .5 1h3" />
              </TextCursor>
            </Slide>
          </Stage>
          <ScrollRail>
            <ScrollArrow><ArrowGlyph $up /></ScrollArrow>
            <ScrollThumb />
            <ScrollArrow><ArrowGlyph /></ScrollArrow>
            <PageJump style={{ marginTop: 6 }}><ArrowGlyph $up /></PageJump>
            <PageJump><ArrowGlyph /></PageJump>
          </ScrollRail>
        </Workspace>

        <StatusBar>
          <StatusText $ml={6}>Slide 24 of 53</StatusText>
          <StatusText $ml={21}>
            <svg width="18" height="15" viewBox="0 0 18 15" fill="none" stroke="#777">
              <path d="M8 1H1.5v12H8M9 1h8v12H9zM11 7l2 2 3-4" />
            </svg>
          </StatusText>
          <StatusText $ml={18}>English (United States)</StatusText>
          <StatusRight>
            <StatusItem $mr={20}>
              <svg width="12" height="16" viewBox="0 0 12 16" fill="#b9b9b9"><path d="M0 6h12v10H0zM4 3h4L6 0z" /></svg>
              Notes
            </StatusItem>
            <StatusItem $mr={20}>
              <MessageSquare size={16} color="#666" fill="#666" />
              Comments
            </StatusItem>
            <ViewButton $active>
              <svg width="16" height="16" viewBox="0 0 16 16" fill="none" stroke="#666"><rect x="1.5" y="1.5" width="13" height="13" /><path d="M5 1.5v8h6v-8M1.5 11.5h13" /></svg>
            </ViewButton>
            <ViewButton>
              <svg width="16" height="16" viewBox="0 0 16 16" fill="none" stroke="#666"><rect x="1.5" y="2.5" width="5" height="4" /><rect x="9.5" y="2.5" width="5" height="4" /><rect x="1.5" y="9.5" width="5" height="4" /><rect x="9.5" y="9.5" width="5" height="4" /></svg>
            </ViewButton>
            <ViewButton>
              <svg width="16" height="16" viewBox="0 0 16 16" fill="none" stroke="#666"><path d="M8 3L2 1.5v12L8 15l6-1.5v-12zM8 3v12M4 5h2M4 8h2M10 5h2M10 8h2" /></svg>
            </ViewButton>
            <ViewButton>
              <svg width="16" height="16" viewBox="0 0 16 16" fill="none" stroke="#666"><path d="M1.5 2h13M3 2v7h10V2M8 9v3M5 14l3-2 3 2" /><path d="M3 3h10v2H3z" fill="#666" /></svg>
            </ViewButton>
            <ViewButton $w={11} $ml={5}><Minus size={11} strokeWidth={3} color="#444" /></ViewButton>
            <ZoomTrack><ZoomThumb /><ZoomTick /></ZoomTrack>
            <ViewButton $w={14}><Plus size={14} strokeWidth={3} color="#444" /></ViewButton>
            <StatusText $ml={15} $mr={12}>88%</StatusText>
            <ViewButton $w={28}>
              <svg width="16" height="16" viewBox="0 0 16 16" fill="none" stroke="#666"><rect x="1.5" y="1.5" width="13" height="13" /><path d="M4 6V4h2M12 6V4h-2M4 10v2h2M12 10v2h-2" /></svg>
            </ViewButton>
          </StatusRight>
        </StatusBar>
      </Page>
    </>
  );
}
